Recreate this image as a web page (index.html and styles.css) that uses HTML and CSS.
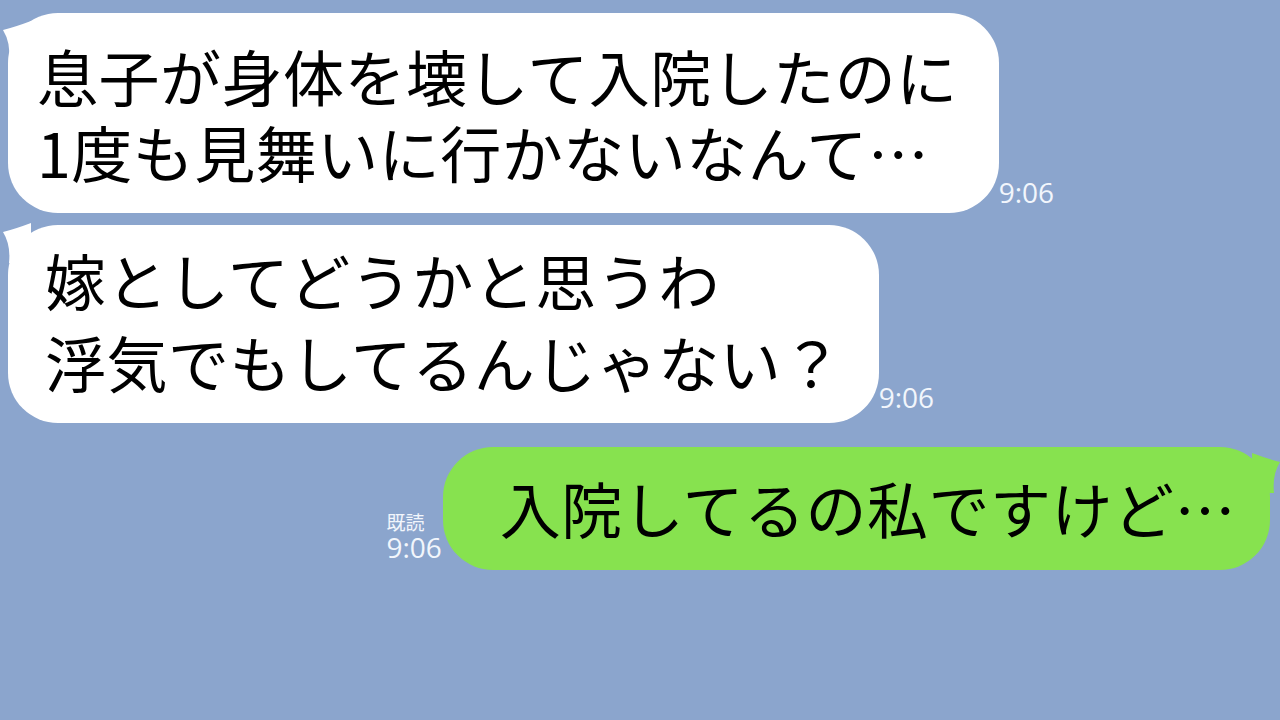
FILE: index.html
```html
<!DOCTYPE html>
<html lang="ja">
  <head>
    <meta charset="UTF-8" />
    <meta name="viewport" content="width=device-width, initial-scale=1.0" />
    <title>トーク</title>
    <link rel="stylesheet" href="styles.css">
  </head>

  <body>
    <div class="chat">
      <div class="row row-first">
        <div class="bubble bubble-left bubble-one">
          <svg class="tail" viewBox="0 0 30 50" width="30" height="50"><path d="M0 17 Q12 14 28 8 L28 48 L6 48 Q8 30 0 17 Z" /></svg>
          <span class="line">息子が身体を壊して入院したのに</span>
          <span class="line">1度も見舞いに行かないなんて…</span>
        </div>
        <span class="time">9:06</span>
      </div>

      <div class="row row-second">
        <div class="bubble bubble-left bubble-two">
          <svg class="tail" viewBox="0 0 30 50" width="30" height="50"><path d="M0 17 Q12 14 28 8 L28 48 L6 48 Q8 30 0 17 Z" /></svg>
          <span class="line">嫁としてどうかと思うわ</span>
          <span class="line">浮気でもしてるんじゃない？</span>
        </div>
        <span class="time">9:06</span>
      </div>

      <div class="row row-mine">
        <div class="meta">
          <span class="read">既読</span>
          <span class="time">9:06</span>
        </div>
        <div class="bubble bubble-right">
          <svg class="tail tail-right" viewBox="0 0 30 50" width="30" height="50"><path d="M0 17 Q12 14 28 8 L28 48 L6 48 Q8 30 0 17 Z" /></svg>
          <span class="line">入院してるの私ですけど…</span>
        </div>
      </div>
    </div>
  </body>
</html>
```

FILE: styles.css
```css
html,
body {
  margin: 0;
  padding: 0;
}

body {
  width: 1280px;
  height: 720px;
  overflow: hidden;
  background: #8ba5cd;
  font-family: "Noto Sans CJK JP", "Noto Sans", sans-serif;
  color: #000;
}

.chat {
  display: flex;
  flex-direction: column;
  padding: 13px 10px 0 8px;
}

.row {
  display: flex;
  align-items: flex-end;
}

.row-second {
  margin-top: 12px;
}

.row-mine {
  margin-top: 24px;
  justify-content: flex-end;
}

.bubble {
  position: relative;
  font-size: 61px;
  font-weight: 400;
  letter-spacing: 0.5px;
  white-space: nowrap;
  border-radius: 50px;
}

.line {
  display: block;
}

.bubble-left {
  background: #fff;
}

.bubble-one {
  line-height: 76px;
  padding: 25px 41px 23px 29px;
}

.bubble-two {
  line-height: 82px;
  padding: 14px 36px 20px 37px;
}

.bubble-right {
  background: #87e24f;
  line-height: 61px;
  padding: 30px 34px 32px 57px;
}

.tail {
  position: absolute;
  left: -5px;
  top: 0;
  fill: #fff;
}

.bubble-two .tail {
  top: -10px;
}

.tail-right {
  left: auto;
  right: -10px;
  top: -2px;
  fill: #87e24f;
  transform: scaleX(-1);
}

.time {
  font-family: "Open Sans", "Noto Sans", sans-serif;
  font-size: 28px;
  line-height: 30px;
  color: #f2f6fc;
  margin-bottom: 6px;
}

.row-second .time {
  margin-bottom: 11px;
}

.meta {
  display: flex;
  flex-direction: column;
  align-items: flex-start;
  margin-right: 1px;
  margin-bottom: 8px;
}

.meta .time {
  margin-bottom: 0;
}

.read {
  font-family: "Noto Sans CJK JP", sans-serif;
  font-size: 19px;
  line-height: 20px;
  color: #f2f6fc;
}
```
